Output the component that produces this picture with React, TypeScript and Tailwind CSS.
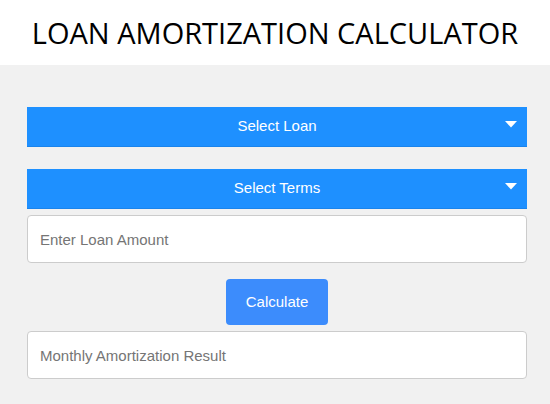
import React from "react";

const Arrow = () => (
  <svg className="absolute right-[10px] top-[14px]" width="12" height="7" viewBox="0 0 12 7">
    <path d="M0 0 H12 L6 6.5 Z" fill="#ffffff" />
  </svg>
);

function SelectBar({ label }: { label: string }) {
  return (
    <div className="relative flex h-[40px] w-full items-center justify-center border-b border-[#1a84ec] bg-[#1e90ff] text-[15px] text-white">
      {label}
      <Arrow />
    </div>
  );
}

function TextBox({ placeholder }: { placeholder: string }) {
  return (
    <input
      readOnly
      placeholder={placeholder}
      className="h-[48px] w-full rounded-[4px] border border-[#cccccc] bg-white px-[12px] text-[15px] text-[#333] outline-none placeholder:text-[#757575]"
    />
  );
}

export default function App() {
  return (
    <div className="flex min-h-[404px] flex-col bg-[#f1f1f1] font-['Liberation_Sans',Arial,sans-serif]">
      <div className="flex h-[65px] items-center justify-center bg-white">
        <h1 className="font-['Open_Sans',sans-serif] text-[29px] font-normal leading-none text-black">
          LOAN AMORTIZATION CALCULATOR
        </h1>
      </div>
      <div className="flex flex-col px-[27px] pt-[42px] pr-[23px]">
        <SelectBar label="Select Loan" />
        <div className="mt-[22px]">
          <SelectBar label="Select Terms" />
        </div>
        <div className="mt-[6px]">
          <TextBox placeholder="Enter Loan Amount" />
        </div>
        <div className="mt-[16px] flex justify-center">
          <button className="h-[46px] w-[102px] rounded-[4px] bg-[#3c8cfc] text-[15px] text-white">
            Calculate
          </button>
        </div>
        <div className="mt-[6px]">
          <TextBox placeholder="Monthly Amortization Result" />
        </div>
      </div>
    </div>
  );
}
